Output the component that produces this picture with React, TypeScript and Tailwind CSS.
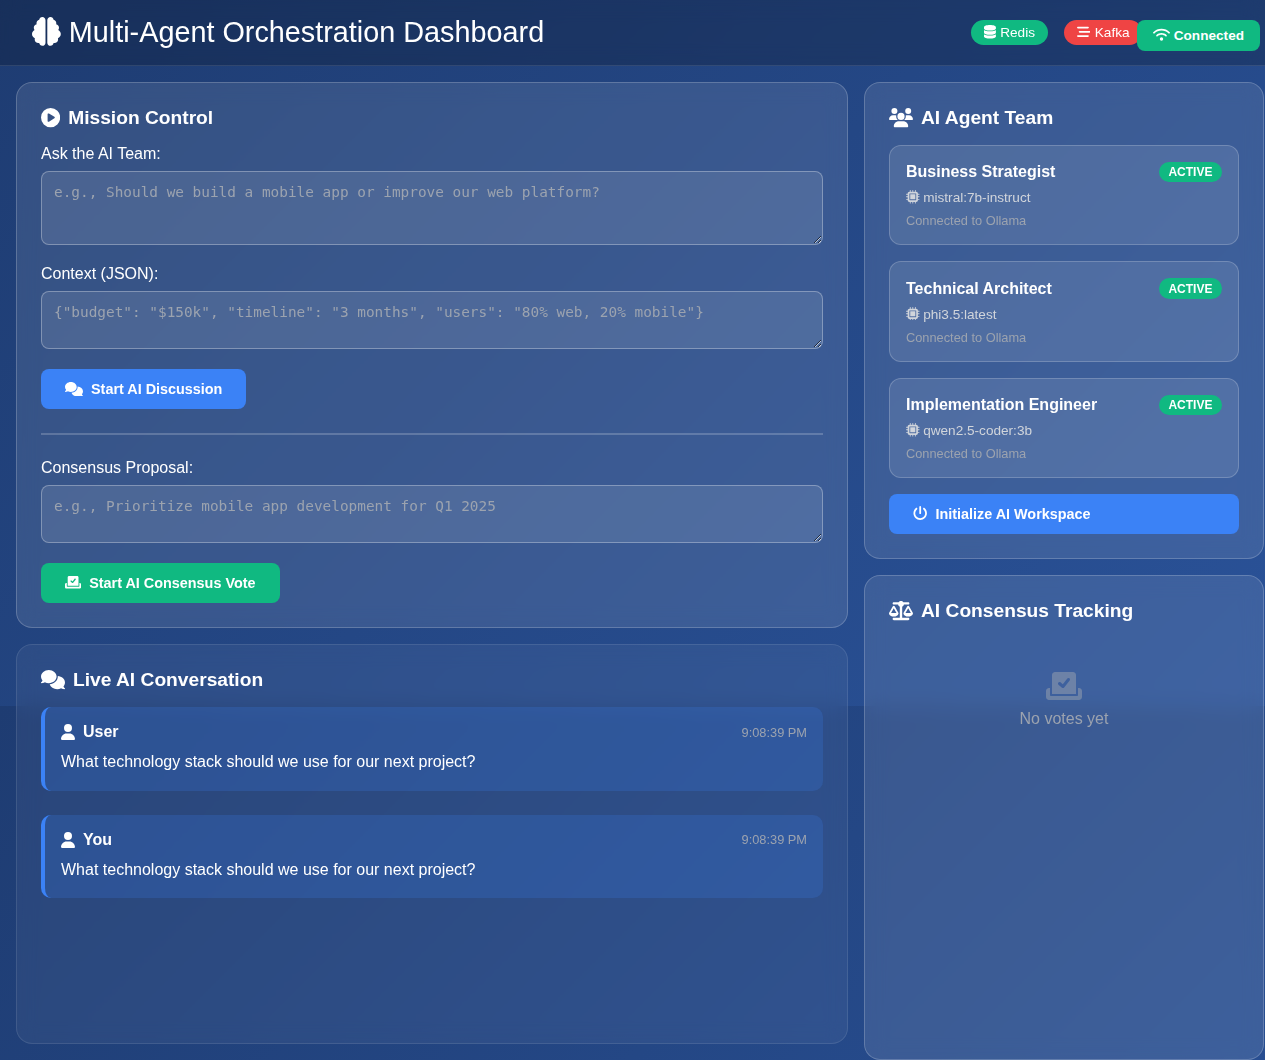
import type { ReactNode } from "react";
import {
  FaBarsStaggered,
  FaBrain,
  FaCirclePlay,
  FaComments,
  FaDatabase,
  FaPowerOff,
  FaScaleBalanced,
  FaUser,
  FaUsers,
} from "react-icons/fa6";

const agents = [
  { name: "Business Strategist", model: "mistral:7b-instruct" },
  { name: "Technical Architect", model: "phi3.5:latest" },
  { name: "Implementation Engineer", model: "qwen2.5-coder:3b" },
];

const messages = [
  { author: "User", time: "9:08:39 PM", text: "What technology stack should we use for our next project?" },
  { author: "You", time: "9:08:39 PM", text: "What technology stack should we use for our next project?" },
];

function BallotIcon({ className }: { className: string }) {
  return (
    <svg viewBox="0 0 576 512" fill="currentColor" className={className}>
      <path d="M480 80C480 53.49 458.5 32 432 32h-288C117.5 32 96 53.49 96 80V384h384V80zM378.9 166.8l-88 112c-4.031 5.156-10 8.438-16.53 9.062C273.6 287.1 272.7 288 271.1 288c-5.719 0-11.21-2.019-15.58-5.769l-56-48C190.3 225.6 189.2 210.4 197.8 200.4c8.656-10.06 23.81-11.19 33.84-2.594l36.97 31.69l72.53-92.28c8.188-10.41 23.31-12.22 33.69-4.062C385.3 141.3 387.1 156.4 378.9 166.8zM528 288H512v112c0 8.836-7.164 16-16 16h-416C71.16 416 64 408.8 64 400V288H48C21.49 288 0 309.5 0 336v96C0 458.5 21.49 480 48 480h480c26.51 0 48-21.49 48-48v-96C576 309.5 554.5 288 528 288z" />
    </svg>
  );
}

function ChipIcon({ className }: { className: string }) {
  return (
    <svg viewBox="0 0 512 512" fill="currentColor" className={className}>
      <path d="M160 352h192V160H160V352zM448 176h48C504.8 176 512 168.8 512 160s-7.162-16-16-16H448V128c0-35.35-28.65-64-64-64h-16V16C368 7.164 360.8 0 352 0s-16 7.164-16 16V64h-64V16C272 7.164 264.8 0 256 0S240 7.164 240 16V64h-64V16C176 7.164 168.8 0 160 0S144 7.164 144 16V64H128C92.65 64 64 92.65 64 128v16H16C7.164 144 0 151.2 0 160s7.164 16 16 16H64v64H16C7.164 240 0 247.2 0 256s7.164 16 16 16H64v64H16C7.164 336 0 343.2 0 352s7.164 16 16 16H64V384c0 35.35 28.65 64 64 64h16v48C144 504.8 151.2 512 160 512s16-7.164 16-16V448h64v48c0 8.836 7.164 16 16 16s16-7.164 16-16V448h64v48c0 8.836 7.164 16 16 16s16-7.164 16-16V448H384c35.35 0 64-28.65 64-64v-16h48c8.838 0 16-7.164 16-16s-7.162-16-16-16H448v-64h48C504.8 272 512 264.8 512 256s-7.162-16-16-16H448V176zM384 368c0 8.836-7.162 16-16 16h-224C135.2 384 128 376.8 128 368v-224C128 135.2 135.2 128 144 128h224C376.8 128 384 135.2 384 144V368z" />
    </svg>
  );
}

function WifiIcon({ className }: { className: string }) {
  return (
    <svg viewBox="0 0 640 512" fill="currentColor" className={className}>
      <circle cx="320" cy="416" r="64" />
      <path d="M320 192c-70.25 0-137.9 25.6-190.5 72.03C116.3 275.7 115 295.9 126.7 309.2C138.5 322.4 158.7 323.7 171.9 312C212.8 275.9 265.4 256 320 256s107.3 19.88 148.1 56C474.2 317.4 481.8 320 489.3 320c8.844 0 17.66-3.656 24-10.81C525 295.9 523.8 275.7 510.5 264C457.9 217.6 390.3 192 320 192z" />
      <path d="M630.2 156.7C546.3 76.28 436.2 32 320 32S93.69 76.28 9.844 156.7c-12.75 12.25-13.16 32.5-.9375 45.25c12.22 12.78 32.47 13.12 45.25 .9375C125.1 133.1 220.4 96 320 96s193.1 37.97 265.8 106.9C592.1 208.8 600 211.8 608 211.8c8.4 0 16.8-3.3 23.1-9.85C643.3 189.2 642.9 168.9 630.2 156.7z" />
    </svg>
  );
}

function Heading({ icon, children }: { icon: ReactNode; children: ReactNode }) {
  return (
    <h2 className="mb-4 flex h-[22px] items-center gap-2 text-[19.2px] leading-[22px] font-bold">
      {icon}
      {children}
    </h2>
  );
}

function Field({ label, placeholder, rows }: { label: string; placeholder: string; rows: number }) {
  return (
    <div className="mb-5">
      <label className="mb-2 block leading-[18px]">{label}</label>
      <textarea
        rows={rows}
        placeholder={placeholder}
        className="block w-full resize-y rounded-lg border border-white/30 bg-white/10 p-3 font-['DejaVu_Sans_Mono',monospace] text-[14.4px] leading-4 text-white placeholder:text-[#9ca3af]"
      />
    </div>
  );
}

function Agent({ name, model }: { name: string; model: string }) {
  return (
    <div className="mb-4 h-[100.4px] rounded-xl border border-white/20 bg-white/10 p-4">
      <div className="mb-2 flex h-[20.4px] items-center justify-between">
        <span className="leading-[18px] font-bold">{name}</span>
        <span className="rounded-full bg-[#10b981] px-[9.6px] py-[3.2px] text-xs leading-[14px] font-bold">ACTIVE</span>
      </div>
      <div className="mb-2 flex items-center gap-[3.6px] text-[13.6px] leading-4 text-[#d1d5db]">
        <ChipIcon className="mb-[2.4px] h-[1em] w-[1em]" />
        {model}
      </div>
      <div className="text-[12.8px] leading-[14px] text-[#9ca3af]">Connected to Ollama</div>
    </div>
  );
}

function Message({ author, time, text }: { author: string; time: string; text: string }) {
  return (
    <div className="mb-6 rounded-[10px] border-l-4 border-[#3b82f6] bg-[#3b82f6]/20 p-4">
      <div className="mb-2 flex h-[18px] items-center justify-between">
        <span className="flex items-center gap-2 leading-[18px] font-bold">
          <FaUser className="h-[1em] w-[0.875em]" />
          {author}
        </span>
        <span className="pt-[1.2px] text-[12.8px] leading-[14px] text-[#9ca3af]">{time}</span>
      </div>
      <p className="leading-[25.6px]">{text}</p>
    </div>
  );
}

export default function App() {
  return (
    <div className="h-[1060px] w-full overflow-hidden bg-[linear-gradient(135deg,#1e3c72_0%,#2a5298_100%)] bg-[length:100%_706px] font-['Liberation_Sans',Arial,sans-serif] text-base text-white">
      <div className="relative w-[1280px]">
        <header className="flex h-[66px] items-center justify-between border-b border-white/10 bg-black/20 px-8 backdrop-blur-[10px]">
          <h1 className="flex items-center gap-2 text-[28.8px] leading-[33px]">
            <FaBrain className="mb-[2.6px] h-[1em] w-[1em]" />
            Multi-Agent Orchestration Dashboard
          </h1>
          <div className="mr-[105.7px] flex gap-4 text-[13.6px] leading-[15.4px]">
            <span className="flex items-center gap-[4.6px] rounded-full bg-[#10b981] px-[12.8px] py-[4.8px]">
              <FaDatabase className="mb-[1.6px] h-[1em] w-[0.875em]" />
              Redis
            </span>
            <span className="flex items-center gap-[4.6px] rounded-full bg-[#ef4444] px-[12.8px] py-[4.8px]">
              <FaBarsStaggered className="mb-[1.6px] h-[1em] w-[1em]" />
              Kafka
            </span>
          </div>
        </header>
        <div className="absolute top-5 right-5 z-10 flex items-center gap-[3.8px] rounded-lg bg-[#10b981] px-4 py-2 text-[13.6px] leading-[15px] font-bold">
          <WifiIcon className="mb-[1.6px] h-[1em] w-[1.25em]" />
          Connected
        </div>

        <main className="grid grid-cols-[832px_400px] gap-4 p-4">
          <div className="flex flex-col gap-4">
            <section className="rounded-2xl border border-white/20 bg-white/10 p-6 backdrop-blur-[10px]">
              <Heading icon={<FaCirclePlay className="h-[1em] w-[1em]" />}>Mission Control</Heading>
              <Field label="Ask the AI Team:" rows={3} placeholder="e.g., Should we build a mobile app or improve our web platform?" />
              <Field label="Context (JSON):" rows={2} placeholder={'{"budget": "$150k", "timeline": "3 months", "users": "80% web, 20% mobile"}'} />
              <button className="flex h-10 items-center gap-2 rounded-lg bg-[#3b82f6] px-6 text-[14.4px] leading-4 font-bold">
                <FaComments className="h-[1em] w-[1.25em]" />
                Start AI Discussion
              </button>
              <hr className="my-6 border-t-2 border-white/20" />
              <Field label="Consensus Proposal:" rows={2} placeholder="e.g., Prioritize mobile app development for Q1 2025" />
              <button className="flex h-10 items-center gap-2 rounded-lg bg-[#10b981] px-6 text-[14.4px] leading-4 font-bold">
                <BallotIcon className="mb-px h-[1em] w-[1.125em]" />
                Start AI Consensus Vote
              </button>
            </section>
            <section className="h-[400px] rounded-2xl border border-white/10 bg-white/5 p-6 backdrop-blur-[10px]">
              <Heading icon={<FaComments className="h-[1em] w-[1.25em]" />}>Live AI Conversation</Heading>
              {messages.map((m) => (
                <Message key={m.author} {...m} />
              ))}
            </section>
          </div>

          <div className="flex flex-col gap-4">
            <section className="h-[477px] rounded-2xl border border-white/20 bg-white/10 p-6 backdrop-blur-[10px]">
              <Heading icon={<FaUsers className="h-[1em] w-[1.25em]" />}>AI Agent Team</Heading>
              {agents.map((a) => (
                <Agent key={a.name} {...a} />
              ))}
              <button className="flex h-10 w-full items-center gap-2 rounded-lg bg-[#3b82f6] px-6 text-[14.4px] leading-4 font-bold">
                <FaPowerOff className="mb-px h-[1em] w-[1em]" />
                Initialize AI Workspace
              </button>
            </section>
            <section className="h-[485px] rounded-2xl border border-white/20 bg-white/10 p-6 backdrop-blur-[10px]">
              <Heading icon={<FaScaleBalanced className="h-[1em] w-[1.25em]" />}>AI Consensus Tracking</Heading>
              <div className="flex flex-col items-center pt-8 text-[#9ca3af]">
                <BallotIcon className="mb-2 h-8 w-9 opacity-50" />
                <p className="leading-[18px]">No votes yet</p>
              </div>
            </section>
          </div>
        </main>
      </div>
    </div>
  );
}
